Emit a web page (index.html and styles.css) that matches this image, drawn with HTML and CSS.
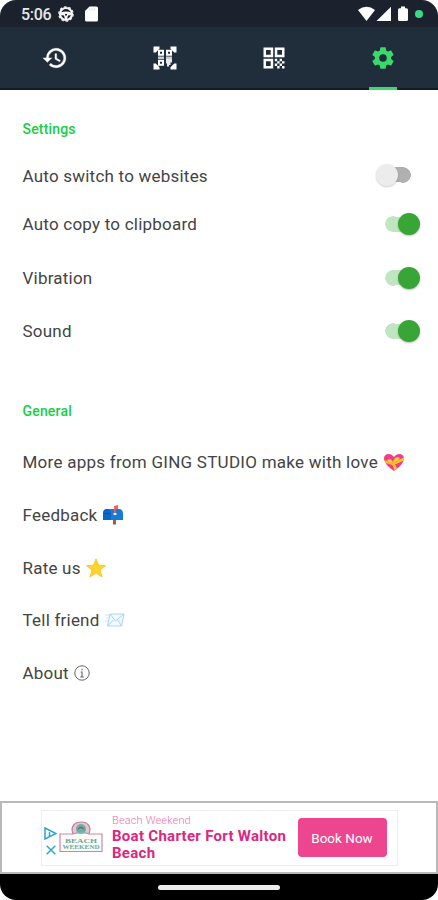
FILE: index.html
```html
<!DOCTYPE html>
<html lang="en">
<head>
<meta charset="utf-8">
<title>Settings</title>
<link rel="stylesheet" href="styles.css">
</head>
<body>
<div class="phone">
  <header class="status">
    <span class="time">5:06</span>
    <svg class="st-wheel" viewBox="0 0 16 16" width="16" height="16"><circle cx="8" cy="8" r="6" fill="none" stroke="#f4f4f4" stroke-width="2.2"/><circle cx="8" cy="8" r="7.2" fill="none" stroke="#f4f4f4" stroke-width="1.2" stroke-dasharray="2.6 1.92"/><path d="M2.5 6.5Q8 4.5 13.5 6.5V9L10 9.5 9 13.5H7L6 9.500 2.500 9Z" fill="#f4f4f4"/><path d="M7 8h2v1.500H7z" fill="#1b222d"/></svg>
    <svg class="st-card" viewBox="0 0 13 16" width="13" height="16"><path d="M4.500 .5H11.500Q13 .5 13 2V14Q13 15.500 11.500 15.500H1.500Q0 15.500 0 14V5Z" fill="#fff"/><path d="M4.500 2.500v2M7 2.500v2M9.500 2.500v2" stroke="#d5d7d8" stroke-width="1"/></svg>
    <span class="spacer"></span>
    <svg viewBox="0 0 60 16" width="60" height="16"><path d="M0 4Q8.500-2.500 17 4L8.500 15Z" fill="#fff"/><path d="M18.500 15 33 .8V15Z" fill="#fff"/><path d="M41.500 2.200H43V.5h4v1.700h1.500Q50 2.200 50 3.700v9.800Q50 15 48.500 15h-7Q40 15 40 13.500V3.700Q40 2.200 41.500 2.200Z" fill="#fff"/></svg>
    <i class="dot"></i>
  </header>
  <nav class="tabs">
    <span class="tab"><svg viewBox="0 0 24 24" width="26" height="26"><path fill="#fff" stroke="#fff" stroke-width=".4" d="M13 3a9 9 0 0 0-9 9H1l3.890 3.890.07.14L9 12H6a7 7 0 1 1 2.060 4.940l-1.420 1.420A9 9 0 1 0 13 3zm-1 5v5l4.280 2.540.72-1.210-3.500-2.080V8H12z"/></svg></span>
    <span class="tab"><svg viewBox="0 0 24 24" width="24" height="24"><path fill="#fff" d="M.5.5h6v2.300l-3.700 3.700H.5zM17.500.5h6v6h-2.300l-3.700-3.700zM.5 23.500v-6h2.300l3.700 3.700v2.300zM23.500 23.500h-6v-2.300l3.700-3.700h2.300z"/><g fill="none" stroke="#fff" stroke-width="2"><path d="M6 4.800h4v4H6zM14 4.800h4v4h-4zM6 14.800h4v4H6z"/></g><path fill="#c9cdd0" d="M5 10.500h6v2.500H5zM13 10.500h6v2.500h-6z"/><path fill="#e8eaeb" d="M13 13h6v3.500h-1.500V19H16v1.500h-2v-3h-1z"/></svg></span>
    <span class="tab"><svg viewBox="0 0 22 22" width="22" height="22"><path fill="#fff" fill-rule="evenodd" d="M.5.5h9.700v9.700H.5zM3 3v4.700h4.700V3zM11.800.5h9.700v9.700h-9.700zM14.300 3v4.700H19V3zM.5 11.800h9.700v9.700H.5zM3 14.300V19h4.700v-4.700z"/><path fill="#fff" d="M11.800 11.800h2.400v2.400h-2.400zM14.200 14.200h2.400v2.400h-2.400zM16.600 11.800H19v2.400h-2.400zM19 14.200h2.500v2.400H19zM11.800 16.600h2.400V19h-2.400zM14.200 19h2.400v2.500h-2.400zM16.600 16.600H19V19h-2.400zM19 19h2.500v2.500H19z"/></svg></span>
    <span class="tab active"><svg viewBox="0 0 24 24" width="26" height="26"><path fill="#39da69" d="M19.430 12.980c.04-.32.070-.64.070-.98s-.03-.66-.07-.98l2.110-1.650c.19-.15.240-.42.120-.64l-2-3.460c-.12-.22-.39-.3-.61-.22l-2.490 1c-.52-.4-1.080-.73-1.690-.98l-.38-2.650A.488.488 0 0 0 14 2h-4c-.25 0-.46.180-.49.420l-.38 2.650c-.61.250-1.170.590-1.690.980l-2.490-1c-.23-.09-.49 0-.61.220l-2 3.460c-.13.220-.07.490.12.640l2.110 1.650c-.04.320-.07.650-.07.980s.03.660.07.980l-2.110 1.650c-.19.150-.24.420-.12.640l2 3.460c.12.220.39.300.61.220l2.490-1c.52.400 1.080.730 1.690.980l.38 2.650c.03.240.24.420.49.420h4c.25 0 .46-.18.490-.42l.38-2.650c.61-.25 1.170-.59 1.690-.98l2.490 1c.23.090.49 0 .61-.22l2-3.460c.12-.22.070-.49-.12-.64l-2.110-1.650zM12 15.500a3.500 3.500 0 1 1 0-7 3.500 3.500 0 0 1 0 7z"/></svg></span>
  </nav>
  <main>
    <h2 class="h-settings">Settings</h2>
    <div class="row r1"><span>Auto switch to websites</span><i class="switch off"></i></div>
    <div class="row r2"><span>Auto copy to clipboard</span><i class="switch"></i></div>
    <div class="row"><span>Vibration</span><i class="switch"></i></div>
    <div class="row"><span>Sound</span><i class="switch"></i></div>
    <h2 class="h-general">General</h2>
    <div class="link"><span class="wide">More apps from GING STUDIO make with love</span>
      <svg viewBox="0 0 20 19" width="20" height="19"><path d="M10 18C7 16 0 10.500 0 5.500C0 0 7-.5 10 4C13-.5 20 0 20 5.500C20 10.500 13 16 10 18Z" fill="#f33c86"/><path d="M0 7 8 9.500 20 4.500V7.500L11 11.500 13 15.500 10.500 17.500 8.500 12 1.500 10Z" fill="#fcc22d"/><path d="M8 10Q1 9 4 6.500Q7 5 9 9Q11 3 15 4.500Q17 7 9 10Z" fill="#ffd54a" stroke="#f19a25" stroke-width=".8"/></svg></div>
    <div class="link"><span>Feedback</span>
      <svg viewBox="0 0 20 20" width="20" height="20"><path d="M10 13h3v6.500h-3z" fill="#a65b3c"/><path d="M4 4h12q4 0 4 5v6H0V9q0-5 4-5Z" fill="#167bd4"/><path d="M4 4q4 0 4 5v6H0V9q0-5 4-5Z" fill="#0c68c4"/><path d="M1.500 8.500h5" stroke="#084d9c"/><path d="M11 9V1l4-1v4l-2.500.6V9Z" fill="#ef6656"/><path d="M10.500 8h3v2h-3z" fill="#dceeff"/></svg></div>
    <div class="link"><span>Rate us</span>
      <svg viewBox="0 0 20 20" width="20" height="20"><path d="M10 .8 12.500 7.200 19.500 7.600 14.100 12 16 19 10 15.100 4 19 5.900 12 .5 7.600 7.500 7.200Z" fill="#fdd32f" stroke="#fdc82e" stroke-linejoin="round"/></svg></div>
    <div class="link"><span>Tell friend</span>
      <svg viewBox="0 0 20 16" width="20" height="16"><path d="M5 2h14l-2.500 12h-14Z" fill="#f3faff" stroke="#a9d4f7"/><path d="m5 2 5.500 7L19 2M2.500 14 9 7.500m3.500 0 4 6.500" fill="none" stroke="#a9d4f7"/><path d="M0 3h4M1 6h3M0 9h3" stroke="#c8e5fb"/></svg></div>
    <div class="link"><span>About</span>
      <svg viewBox="0 0 16 16" width="16" height="16"><circle cx="8" cy="8" r="7.200" fill="none" stroke="#666" stroke-width="1"/><path d="M8 3.800v1.500M6.700 7H8v5M6.300 12h3.400" fill="none" stroke="#666" stroke-width="1.100"/></svg></div>
  </main>
  <section class="adbar">
    <div class="ad">
      <div class="adchoices">
        <svg viewBox="0 0 13 13" width="13" height="13"><path d="M1 1 12 6.500 1 12ZM5.500 5v4" fill="none" stroke="#2aa4cb" stroke-width="1.500"/></svg>
        <svg viewBox="0 0 10 10" width="10" height="10"><path d="m.7.7 8.600 8.600m0-8.600L.7 9.300" stroke="#2aa4cb" stroke-width="1.400"/></svg>
      </div>
      <svg class="logo" viewBox="0 0 44 32" width="44" height="32"><path d="M14 13C11 5 16 1 22 1S33 5 30 13" fill="#eac3cf" stroke="#bd8297" stroke-width="1.200"/><path d="M1 13H14Q22 10 30 13H43V30.500H1Z" fill="#fffafa" stroke="#c18b9c" stroke-width="1.200"/><circle cx="22" cy="8" r="5" fill="#5bb9a1"/><path d="M18 9Q22 2 26 9L22 7Z" fill="#cc3678"/><path d="M16 12h12" stroke="#8bbfae"/><text x="22" y="21.500" text-anchor="middle" textLength="32" lengthAdjust="spacingAndGlyphs">BEACH</text><text x="22" y="28" text-anchor="middle" textLength="37" lengthAdjust="spacingAndGlyphs">WEEKEND</text></svg>
      <div class="adtext"><span class="brand">Beach Weekend</span><strong>Boat Charter Fort Walton<br>Beach</strong></div>
      <span class="book">Book Now</span>
    </div>
  </section>
  <footer class="navbar"><i></i></footer>
</div>
</body>
</html>
```
FILE: styles.css
```css
* { box-sizing: border-box; }
body { margin: 0; background: #fff; font-family: Roboto, "Liberation Sans", sans-serif; }
svg { display: block; flex: none; }
.phone { width: 438px; height: 900px; display: flex; flex-direction: column; overflow: hidden; background: #fff; border-radius: 16px; }
.status { height: 27px; flex: none; background: #1b222d; display: flex; align-items: center; padding: 1px 15px 0 21px; }
.time { font-size: 16px; font-weight: 500; color: #e8e8e8; width: 37px; letter-spacing: -.3px; }
.st-card { margin-left: 11px; }
.spacer { flex: 1; }
.dot { width: 8px; height: 8px; border-radius: 50%; background: #3bd886; margin-left: -3px; }
.tabs { height: 63px; flex: none; background: #202d3a; border-bottom: 2px solid #111b27; display: grid; grid-template-columns: repeat(4, 1fr); }
.tab { display: flex; align-items: center; justify-content: center; padding: 1px 0 0 1px; }
.tab.active { background: linear-gradient(#39da69, #39da69) center bottom / 28px 3px no-repeat; margin-bottom: -2px; padding: 1px 0 2px; }
main { flex: none; height: 711px; padding: 0 18px 0 22.500px; }
h2 { margin: 0; color: #16cf43; font-size: 14px; font-weight: 500; line-height: 20px; letter-spacing: .18px; }
.h-settings { padding-top: 29px; }
.h-general { margin-top: 43px; margin-bottom: 15px; }
.row, .link { display: flex; align-items: center; font-size: 17px; letter-spacing: .22px; color: #444; white-space: nowrap; }
.row { height: 53.500px; justify-content: space-between; }
.row.r1 { height: 49px; margin-top: 12px; }
.row.r2 { height: 48px; margin-bottom: 3px; }
.link { height: 52.650px; gap: 5.500px; }
.wide { letter-spacing: .26px; }
.switch { width: 35px; height: 24px; display: flex; align-items: center; justify-content: flex-end; background: radial-gradient(circle at 8px 12px, #c0e6c1 7.500px, transparent 8px), linear-gradient(#c0e6c1, #c0e6c1) 8px center / 18px 15px no-repeat; }
.switch::before { content: ""; width: 22px; height: 22px; border-radius: 50%; background: #37a637; box-shadow: 0 1px 2px #0004; }
.switch.off { margin: 0 9px 2px 0; justify-content: flex-start; background: radial-gradient(circle at 27px 12px, #b0b0b0 7.500px, transparent 8px), linear-gradient(#b0b0b0, #b0b0b0) 9px center / 18px 15px no-repeat; }
.switch.off::before { background: #ececec; box-shadow: 0 1px 2px #0003; }
.adbar { height: 73px; flex: none; border: 2px solid #b9b9b9; padding: 7px 38.500px 6px 39px; background: #fff; }
.ad { height: 56px; border: 1px solid #eee; display: flex; align-items: center; padding-right: 10px; }
.adchoices { width: 17px; display: flex; flex-direction: column; align-items: center; gap: 5px; padding-top: 5px; }
.logo { margin-top: -3px; }
.logo text { font: 700 7px "Liberation Serif", serif; fill: #64ad96; }
.adtext { margin-left: 9px; flex: 1; display: flex; flex-direction: column; white-space: nowrap; color: #db277f; }
.brand { font-size: 11px; line-height: 12px; font-weight: 300; letter-spacing: .15px; color: #ec75a9; }
.adtext strong { font-size: 15px; line-height: 17px; font-weight: 700; letter-spacing: .29px; padding-top: 1px; margin-bottom: -1px; }
.book { width: 89px; height: 39px; flex: none; margin-top: -1px; border-radius: 4px; background: #ed468f; color: #fff; font-size: 13.500px; display: flex; align-items: center; justify-content: center; }
.navbar { background: #000; display: flex; justify-content: center; align-items: center; flex: 1; }
.navbar i { width: 122px; height: 5px; border-radius: 3px; background: #ededed; }
```
